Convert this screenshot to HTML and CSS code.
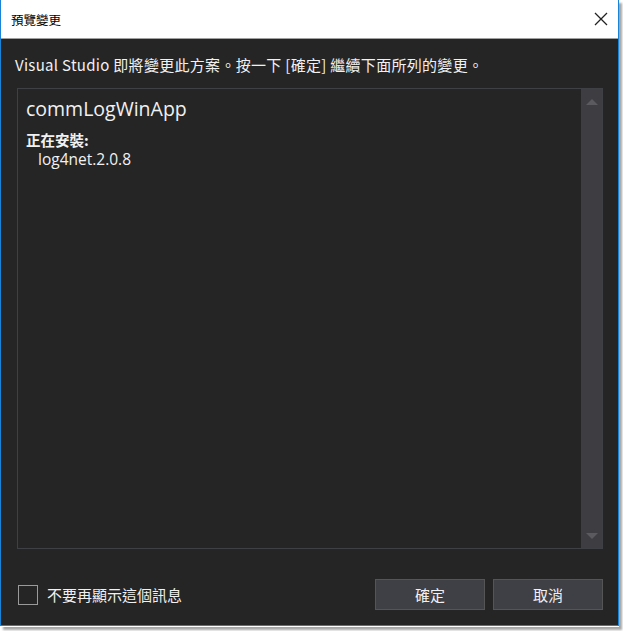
FILE: index.html
```html
<!DOCTYPE html>
<html lang="zh-Hant">
<head>
<meta charset="utf-8">
<title>預覽變更</title>
<link rel="stylesheet" href="styles.css">
</head>
<body>
<div class="shadow">
<div class="window">
  <div class="titlebar">
    <span class="title">預覽變更</span>
    <svg class="close" width="14" height="14" viewBox="0 0 14 14"><path d="M1 1L13 13M13 1L1 13" stroke="#222" stroke-width="1.3" fill="none"/></svg>
  </div>
  <div class="body">
    <p class="message">Visual Studio 即將變更此方案。按一下 [確定] 繼續下面所列的變更。</p>
    <div class="listbox">
      <div class="list-content">
        <div class="project">commLogWinApp</div>
        <div class="section">正在安裝:</div>
        <div class="item">log4net.2.0.8</div>
      </div>
      <div class="scrollbar">
        <svg class="arrow" width="16" height="8" viewBox="0 0 16 8"><path d="M2 7L8 1L14 7Z" fill="#5a5a5f"/></svg>
        <svg class="arrow" width="16" height="8" viewBox="0 0 16 8"><path d="M2 1L8 7L14 1Z" fill="#5a5a5f"/></svg>
      </div>
    </div>
    <div class="footer">
      <label class="check"><span class="box"></span>不要再顯示這個訊息</label>
      <div class="buttons">
        <button class="btn">確定</button>
        <button class="btn">取消</button>
      </div>
    </div>
  </div>
</div>
</div>
</body>
</html>
```
FILE: styles.css
```css
html, body { margin: 0; padding: 0; background: #fff; }
body { width: 623px; height: 631px; overflow: hidden; font-family: "Open Sans", "Noto Sans CJK TC", sans-serif; }
.shadow { width: 619px; height: 627px; box-shadow: 3px 3px 2px rgba(0,0,0,0.35); }
.window {
  width: 617px; height: 625px;
  border: 1px solid #1883d7; border-top: none;
  display: flex; flex-direction: column;
  background: #252526;
}
.titlebar {
  height: 39px; background: #fff; border-bottom: 1px solid #a0a0a0;
  display: flex; align-items: center; justify-content: space-between;
  padding: 0 10px 0 10px; box-sizing: border-box; flex: none;
}
.title { font-size: 12.5px; color: #000; font-family: "Noto Sans CJK TC", sans-serif; }
.body { flex: 1; display: flex; flex-direction: column; padding: 0 15px 0 16px; color: #f1f1f1; }
.message { margin: 16px 0 0 -2px; font-size: 15px; line-height: 20px; font-family: "Noto Sans CJK TC", sans-serif; letter-spacing: 0.3px; }
.listbox {
  margin-top: 13px; height: 461px; border: 1px solid #3f3f46; display: flex; box-sizing: border-box;
}
.list-content { flex: 1; padding: 7px 8px; }
.project { font-size: 19.5px; line-height: 26px; font-family: "Open Sans", sans-serif; }
.section { margin-top: 9px; font-size: 14.5px; line-height: 18px; font-weight: bold; font-family: "Noto Sans CJK TC", sans-serif; }
.item { padding-left: 12px; font-size: 15.5px; line-height: 20px; font-family: "Open Sans", sans-serif; }
.scrollbar {
  width: 21px; background: #3e3e42; display: flex; flex-direction: column; justify-content: space-between; align-items: center;
  padding: 9px 0 8px; box-sizing: border-box;
}
.footer { display: flex; align-items: center; justify-content: space-between; margin-top: 30px; }
.check { display: flex; align-items: center; font-size: 15px; font-family: "Noto Sans CJK TC", sans-serif; color: #f1f1f1; }
.box { width: 18px; height: 18px; border: 1px solid #9a9a9a; margin: 0 9px 0 1px; }
.buttons { display: flex; gap: 8px; }
.btn {
  width: 110px; height: 31px; background: #3f3f46; border: 1px solid #555; color: #f1f1f1;
  font-size: 15px; font-family: "Noto Sans CJK TC", sans-serif; padding: 0;
}
```
